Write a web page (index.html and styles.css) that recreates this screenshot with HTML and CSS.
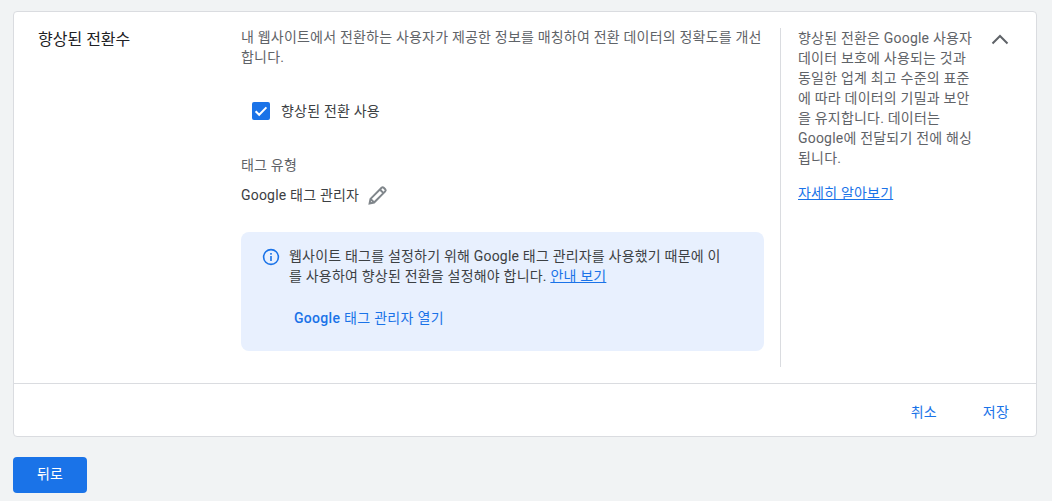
FILE: index.html
```html
<!DOCTYPE html>
<html lang="ko">
<head>
<meta charset="utf-8">
<title>향상된 전환수</title>
<link rel="stylesheet" href="styles.css">
</head>
<body>

<!--Card-->
<div class="card">
  <div class="cardBody">
    <div class="title">향상된 전환수</div>

    <div class="mainCol">
      <p class="desc">내 웹사이트에서 전환하는 사용자가 제공한 정보를 매칭하여 전환 데이터의 정확도를 개선합니다.</p>

      <div class="checkRow">
        <span class="checkBox">
          <svg width="18" height="18" viewBox="0 0 18 18"><path d="M3.600 9.200l3.600 3.600 7.200-7.400" fill="none" stroke="#fff" stroke-width="2"/></svg>
        </span>
        <span>향상된 전환 사용</span>
      </div>

      <div class="tagLabel">태그 유형</div>
      <div class="tagRow">
        <span>Google 태그 관리자</span>
        <svg class="pencil" width="20" height="20" viewBox="0 0 20 20"><path d="M1.600 18.400l.9-4.500L13.600 2.800a1.500 1.500 0 0 1 2.100 0l1.500 1.500a1.500 1.500 0 0 1 0 2.100L6.100 17.500zM2.500 13.900l3.600 3.600M11.900 4.500l3.600 3.600" fill="none" stroke="#80868b" stroke-width="2"/></svg>
      </div>

      <!--Info box-->
      <div class="infoBox">
        <div class="infoRow">
          <svg class="infoIcon" width="18" height="18" viewBox="0 0 18 18"><circle cx="9" cy="9" r="7.400" fill="none" stroke="#1a73e8" stroke-width="1.600"/><rect x="8.200" y="8" width="1.600" height="5" fill="#1a73e8"/><rect x="8.200" y="5" width="1.600" height="1.700" fill="#1a73e8"/></svg>
          <p class="infoText">웹사이트 태그를 설정하기 위해 Google 태그 관리자를 사용했기 때문에 이를 사용하여 향상된 전환을 설정해야 합니다. <a href="#">안내 보기</a></p>
        </div>
        <div class="infoAction"><span class="brand">Google</span> 태그 관리자 열기</div>
      </div>
    </div>

    <div class="sideCol">
      <p class="sideText">향상된 전환은 Google 사용자 데이터 보호에 사용되는 것과 동일한 업계 최고 수준의 표준에 따라 데이터의 기밀과 보안을 유지합니다. 데이터는 Google에 전달되기 전에 해싱됩니다.</p>
      <a class="sideLink" href="#">자세히 알아보기</a>
    </div>

    <svg class="chevron" width="18" height="11" viewBox="0 0 18 11"><path d="M1.500 9.500L9 2l7.500 7.500" fill="none" stroke="#5f6368" stroke-width="2"/></svg>
  </div>

  <!--Footer-->
  <div class="cardFooter">
    <button class="textBtn">취소</button>
    <button class="textBtn">저장</button>
  </div>
</div>

<button class="backBtn">뒤로</button>

</body>
</html>
```

FILE: styles.css
```css
html, body {
  height: 100%;
}

body {
  margin: 0;
  padding: 11px 15px 0 13px;
  box-sizing: border-box;
  overflow: hidden;
  background-color: #f1f3f4;
  color: #3c4043;
  font-family: Roboto, "Noto Sans CJK KR", sans-serif;
  font-size: 14px;
  line-height: 20px;
  letter-spacing: 0.2px;
}

p {
  margin: 0;
}

a {
  color: #1a73e8;
}

button {
  border: none;
  background: none;
  font-family: inherit;
  font-size: 14px;
  letter-spacing: 0.2px;
  padding: 0;
}

/* Card */
.card {
  background-color: #fff;
  border: 1px solid #dadce0;
  border-radius: 4px;
  height: 426px;
  box-sizing: border-box;
  display: flex;
  flex-direction: column;
}

.cardBody {
  display: flex;
  height: 372px;
  border-bottom: 1px solid #dadce0;
  padding: 16px 0 16px 24px;
  box-sizing: border-box;
}

.title {
  width: 203px;
  flex: none;
  font-size: 16px;
  line-height: 22px;
  letter-spacing: 0;
  color: #202124;
  padding-top: 1px;
}

.mainCol {
  width: 523px;
  flex: none;
  margin-top: -1px;
}

.desc {
  color: #5f6368;
  margin-bottom: 34px;
}

.checkRow {
  display: flex;
  align-items: center;
  gap: 11px;
  margin-left: 11px;
  height: 20px;
  margin-bottom: 34px;
}

.checkBox {
  width: 18px;
  height: 18px;
  background-color: #1a73e8;
  border-radius: 2px;
  display: block;
}

.checkBox svg {
  display: block;
}

.tagLabel {
  color: #5f6368;
  margin-bottom: 9px;
}

.tagRow {
  display: flex;
  align-items: center;
  gap: 9px;
  height: 22px;
  margin-bottom: 26px;
}

.infoBox {
  background-color: #e8f0fe;
  border-radius: 8px;
  height: 119px;
  box-sizing: border-box;
  padding: 14px 40px 0 21px;
}

.infoRow {
  display: flex;
  gap: 9px;
}

.infoIcon {
  flex: none;
  margin-top: 2px;
}

.infoAction {
  color: #1a73e8;
  letter-spacing: 0.3px;
  margin: 22px 0 0 32px;
}

.brand {
  font-weight: 500;
}

/* Right column */
.sideCol {
  width: 202px;
  flex: none;
  margin-left: 16px;
  padding: 0 0 0 17px;
  border-left: 1px solid #dadce0;
  box-sizing: border-box;
  color: #5f6368;
}

.sideText {
  width: 178px;
  margin-bottom: 15px;
}

.chevron {
  flex: none;
  margin: 6px 0 0 9px;
}

.cardFooter {
  flex: 1;
  display: flex;
  justify-content: flex-end;
  align-items: center;
  gap: 46px;
  padding: 2px 27px 0 0;
}

.textBtn {
  color: #1a73e8;
}

.backBtn {
  display: block;
  margin-top: 20px;
  width: 74px;
  height: 36px;
  padding-bottom: 4px;
  background-color: #1a73e8;
  border-radius: 4px;
  color: #fff;
}
```
